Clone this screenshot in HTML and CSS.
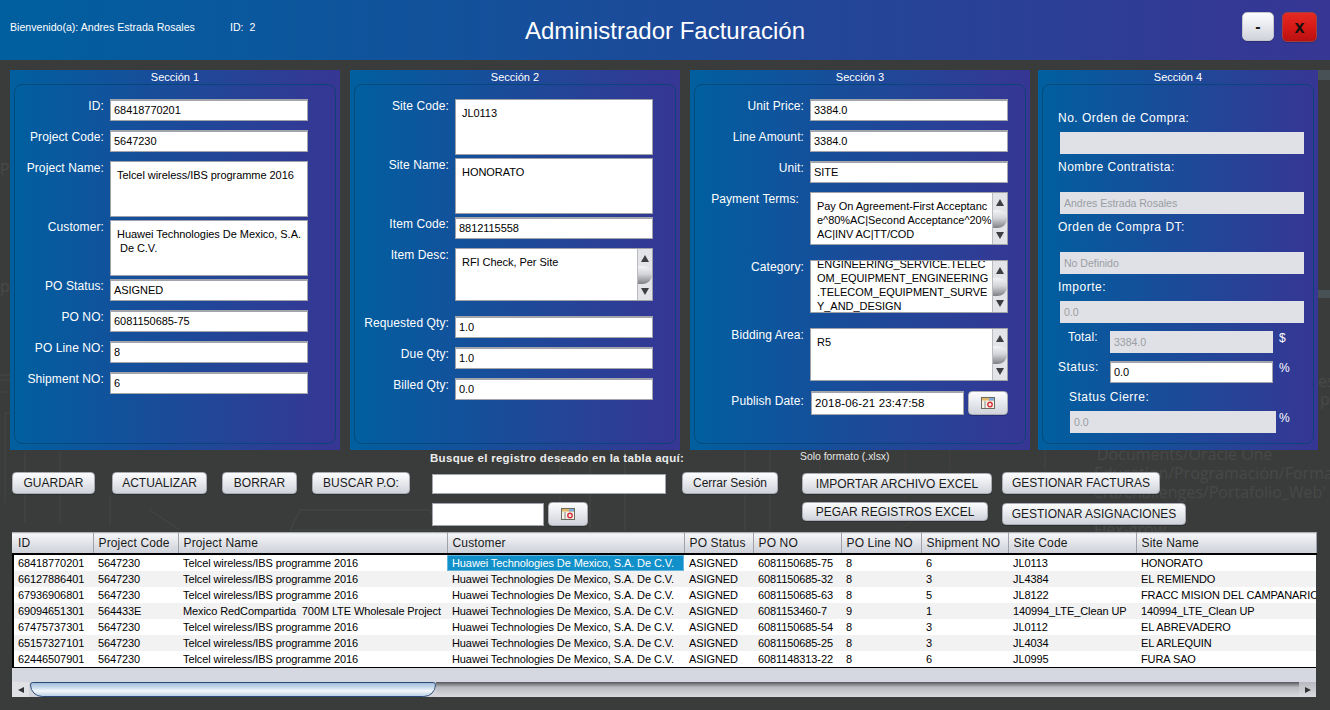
FILE: index.html
```html
<!DOCTYPE html>
<html lang="es">
<head>
<meta charset="utf-8">
<title>Administrador Facturación</title>
<link rel="stylesheet" href="styles.css">
</head>
<body>
<svg width="0" height="0" class="defs">
  <symbol id="cal" viewBox="0 0 14 12">
    <rect x="0.5" y="0.5" width="13" height="11" fill="#f4f1e6" stroke="#6d6a60"/>
    <rect x="1" y="1" width="12" height="2.5" fill="#e2b765"/>
    <rect x="8" y="1" width="5" height="2.5" fill="#7fa8d8"/>
    <line x1="4" y1="4" x2="4" y2="11" stroke="#8a8a8a"/>
    <circle cx="9" cy="7.5" r="2.2" fill="none" stroke="#d8313a" stroke-width="1.4"/>
  </symbol>
</svg>
<div class="app">
  <div class="wallpaper">
    <span class="ghost g1">Documents/Oracle One</span>
    <span class="ghost g2">Education/Programación/Formación Fr</span>
    <span class="ghost g3">era/challenges/Portafolio_Web'</span>
    <span class="ghost g4">Flex-grow</span>
    <span class="ghost g5">es</span>
    <span class="ghost g6">p</span>
    <span class="ghost g7">Pa</span>
    <span class="ghost g8">pt</span>
    <svg class="wall-art" width="1330" height="710" viewBox="0 0 1330 710" fill="none">
      <path d="M1318 70h12v10h-12zM1318 290h12v8h-12z" fill="#485256"/>
      <path d="M0 375h10M0 380h10M0 392h10M5 413h5M5 413v90M25 452v70M60 452v70M110 495v30M150 510l30 20M560 450v80M590 450v80M625 450v80M745 450v80M770 450v80M1045 450v20" stroke="#444746"/>
      <path d="M820 450v70M905 450v70M930 505l-30 25M950 450v20" stroke="#474141"/>
      <path d="M300 510h130l10 20H290z" stroke="#434846"/>
    </svg>
  </div>

  <header class="topbar">
    <div class="welcome"><span class="welcome-name">Bienvenido(a): Andres Estrada Rosales</span><span>ID:&nbsp; 2</span></div>
    <h1 class="title">Administrador Facturación</h1>
    <div class="win-buttons">
      <button class="btn win-min">-</button>
      <button class="btn win-close">x</button>
    </div>
  </header>

  <main class="panels">
    <section class="panel p1">
      <h2 class="panel-title">Sección 1</h2>
      <div class="frame">
        <div class="row"><label>ID:</label><div class="field">68418770201</div></div>
        <div class="row"><label>Project Code:</label><div class="field">5647230</div></div>
        <div class="row"><label>Project Name:</label><div class="area tall"><div class="area-text">Telcel wireless/IBS programme 2016</div></div></div>
        <div class="row tight"><label>Customer:</label><div class="area tall"><div class="area-text">Huawei Technologies De Mexico, S.A.<br>&nbsp;De C.V.</div></div></div>
        <div class="row tight"><label>PO Status:</label><div class="field">ASIGNED</div></div>
        <div class="row"><label>PO NO:</label><div class="field">6081150685-75</div></div>
        <div class="row"><label>PO Line NO:</label><div class="field">8</div></div>
        <div class="row"><label>Shipment NO:</label><div class="field">6</div></div>
      </div>
    </section>

    <section class="panel p2">
      <h2 class="panel-title">Sección 2</h2>
      <div class="frame">
        <div class="row"><label>Site Code:</label><div class="area tall"><div class="area-text">JL0113</div></div></div>
        <div class="row tight"><label>Site Name:</label><div class="area tall"><div class="area-text">HONORATO</div></div></div>
        <div class="row tight"><label>Item Code:</label><div class="field">8812115558</div></div>
        <div class="row"><label>Item Desc:</label><div class="area mid"><div class="area-text">RFI Check, Per Site</div><div class="vbar"><i class="up"></i><i class="lens"></i><i class="down"></i></div></div></div>
        <div class="row after-mid"><label>Requested Qty:</label><div class="field">1.0</div></div>
        <div class="row"><label>Due Qty:</label><div class="field">1.0</div></div>
        <div class="row"><label>Billed Qty:</label><div class="field">0.0</div></div>
      </div>
    </section>

    <section class="panel p3">
      <h2 class="panel-title">Sección 3</h2>
      <div class="frame">
        <div class="row"><label>Unit Price:</label><div class="field">3384.0</div></div>
        <div class="row"><label>Line Amount:</label><div class="field">3384.0</div></div>
        <div class="row"><label>Unit:</label><div class="field">SITE</div></div>
        <div class="row"><label class="inset">Payment Terms:</label><div class="area mid"><div class="area-text">Pay On Agreement-First Acceptanc<br>e^80%AC|Second Acceptance^20%<br>AC|INV AC|TT/COD</div><div class="vbar"><i class="up"></i><i class="lens"></i><i class="down"></i></div></div></div>
        <div class="row after-mid"><label>Category:</label><div class="area mid"><div class="area-text scrolled">ENGINEERING_SERVICE.TELEC<br>OM_EQUIPMENT_ENGINEERING<br>.TELECOM_EQUIPMENT_SURVE<br>Y_AND_DESIGN</div><div class="vbar"><i class="up"></i><i class="lens"></i><i class="down"></i></div></div></div>
        <div class="row after-mid"><label>Bidding Area:</label><div class="area mid"><div class="area-text">R5</div><div class="vbar"><i class="up"></i><i class="lens"></i><i class="down"></i></div></div></div>
        <div class="row date-row"><label>Publish Date:</label><div class="field date-field">2018-06-21 23:47:58</div><button class="btn cal-btn"><svg class="cal-icon"><use href="#cal"/></svg></button></div>
      </div>
    </section>

    <section class="panel p4">
      <h2 class="panel-title">Sección 4</h2>
      <div class="frame stack">
        <label class="l-first">No. Orden de Compra:</label>
        <div class="field off wide f-first"></div>
        <label class="l-next">Nombre Contratista:</label>
        <div class="field off wide f-low">Andres Estrada Rosales</div>
        <label class="l-next">Orden de Compra DT:</label>
        <div class="field off wide f-low">No Definido</div>
        <label class="l-next">Importe:</label>
        <div class="field off wide f-near">0.0</div>
        <div class="pair total"><label>Total:</label><div class="field off short">3384.0</div><span class="unit">$</span></div>
        <div class="pair status"><label>Status:</label><div class="field short">0.0</div><span class="unit">%</span></div>
        <label class="l-cierre">Status Cierre:</label>
        <div class="pair cierre"><div class="field off cierre-field">0.0</div><span class="unit">%</span></div>
      </div>
    </section>
  </main>

  <section class="toolbar">
    <div class="tb-actions">
      <button class="btn b-guardar">GUARDAR</button>
      <button class="btn b-actualizar">ACTUALIZAR</button>
      <button class="btn b-borrar">BORRAR</button>
      <button class="btn b-buscar">BUSCAR P.O:</button>
    </div>
    <div class="tb-search">
      <div class="search-title">Busque el registro deseado en la tabla aquí:</div>
      <div class="search-input"></div>
      <div class="search-date"><div class="search-input small"></div><button class="btn cal-btn"><svg class="cal-icon"><use href="#cal"/></svg></button></div>
    </div>
    <button class="btn b-cerrar">Cerrar Sesión</button>
    <div class="tb-excel">
      <div class="excel-note">Solo formato (.xlsx)</div>
      <button class="btn b-importar">IMPORTAR ARCHIVO EXCEL</button>
      <button class="btn b-pegar">PEGAR REGISTROS EXCEL</button>
    </div>
    <div class="tb-manage">
      <button class="btn b-facturas">GESTIONAR FACTURAS</button>
      <button class="btn b-asign">GESTIONAR ASIGNACIONES</button>
    </div>
  </section>

  <section class="grid-wrap">
    <table class="grid">
      <colgroup>
        <col class="c1"><col class="c2"><col class="c3"><col class="c4"><col class="c5"><col class="c6"><col class="c7"><col class="c8"><col class="c9"><col class="c10">
      </colgroup>
      <thead>
        <tr><th>ID</th><th>Project Code</th><th>Project Name</th><th>Customer</th><th>PO Status</th><th>PO NO</th><th>PO Line NO</th><th>Shipment NO</th><th>Site Code</th><th>Site Name</th></tr>
      </thead>
      <tbody>
        <tr><td>68418770201</td><td>5647230</td><td>Telcel wireless/IBS programme 2016</td><td class="sel">Huawei Technologies De Mexico, S.A. De C.V.</td><td>ASIGNED</td><td>6081150685-75</td><td>8</td><td>6</td><td>JL0113</td><td>HONORATO</td></tr>
        <tr><td>66127886401</td><td>5647230</td><td>Telcel wireless/IBS programme 2016</td><td>Huawei Technologies De Mexico, S.A. De C.V.</td><td>ASIGNED</td><td>6081150685-32</td><td>8</td><td>3</td><td>JL4384</td><td>EL REMIENDO</td></tr>
        <tr><td>67936906801</td><td>5647230</td><td>Telcel wireless/IBS programme 2016</td><td>Huawei Technologies De Mexico, S.A. De C.V.</td><td>ASIGNED</td><td>6081150685-63</td><td>8</td><td>5</td><td>JL8122</td><td>FRACC MISION DEL CAMPANARIO</td></tr>
        <tr><td>69094651301</td><td>564433E</td><td>Mexico RedCompartida&nbsp; 700M LTE Wholesale Project</td><td>Huawei Technologies De Mexico, S.A. De C.V.</td><td>ASIGNED</td><td>6081153460-7</td><td>9</td><td>1</td><td>140994_LTE_Clean UP</td><td>140994_LTE_Clean UP</td></tr>
        <tr><td>67475737301</td><td>5647230</td><td>Telcel wireless/IBS programme 2016</td><td>Huawei Technologies De Mexico, S.A. De C.V.</td><td>ASIGNED</td><td>6081150685-54</td><td>8</td><td>3</td><td>JL0112</td><td>EL ABREVADERO</td></tr>
        <tr><td>65157327101</td><td>5647230</td><td>Telcel wireless/IBS programme 2016</td><td>Huawei Technologies De Mexico, S.A. De C.V.</td><td>ASIGNED</td><td>6081150685-25</td><td>8</td><td>3</td><td>JL4034</td><td>EL ARLEQUIN</td></tr>
        <tr><td>62446507901</td><td>5647230</td><td>Telcel wireless/IBS programme 2016</td><td>Huawei Technologies De Mexico, S.A. De C.V.</td><td>ASIGNED</td><td>6081148313-22</td><td>8</td><td>6</td><td>JL0995</td><td>FURA SAO</td></tr>
      </tbody>
    </table>
    <div class="grid-fill"></div>
    <div class="hbar">
      <div class="hbar-btn"><i class="left"></i></div>
      <div class="hbar-thumb"></div>
      <div class="hbar-track"></div>
      <div class="hbar-btn"><i class="right"></i></div>
    </div>
  </section>
</div>
</body>
</html>
```

FILE: styles.css
```css
* { box-sizing: border-box; }
html, body { margin: 0; padding: 0; }
body {
  width: 1330px;
  height: 710px;
  overflow: hidden;
  background: #3a3c3b;
  font-family: "Liberation Sans", Arial, sans-serif;
  font-size: 12px;
  color: #111;
}
.defs { position: absolute; }
.app { position: relative; width: 1330px; height: 710px; overflow: hidden; }

/* Desktop showing through behind the window */
.wallpaper { position: absolute; inset: 0; }
.wall-art { position: absolute; left: 0; top: 0; }
.ghost {
  position: absolute;
  font-family: "Open Sans", sans-serif;
  font-size: 16px;
  line-height: 20px;
  color: #474949;
  white-space: nowrap;
}
.g1 { left: 1097px; top: 444px; }
.g2 { left: 1094px; top: 463px; }
.g3 { left: 1094px; top: 482px; }
.g4 { left: 1094px; top: 519px; }
.g5 { left: 1318px; top: 371px; width: 12px; overflow: hidden; }
.g6 { left: 1320px; top: 389px; width: 10px; overflow: hidden; }
.g7 { left: 0; top: 159px; width: 10px; overflow: hidden; }
.g8 { left: 0; top: 276px; width: 10px; overflow: hidden; }

/* Top bar */
.topbar {
  position: relative;
  height: 60px;
  display: grid;
  grid-template-columns: 1fr auto 1fr;
  background: linear-gradient(90deg, #005f9f 0%, #373694 100%);
  color: #fff;
}
.welcome {
  display: flex;
  padding: 20px 0 0 10px;
  font-size: 10.6px;
  line-height: 14px;
}
.welcome-name { width: 220px; }
.title {
  margin: 0;
  padding-top: 17px;
  font-size: 24px;
  line-height: 28px;
  font-weight: 400;
}
.win-buttons {
  display: flex;
  justify-content: flex-end;
  gap: 8px;
  padding: 12px 13px 0 0;
}

/* Buttons */
.btn {
  display: block;
  margin: 0;
  padding: 0;
  height: 22px;
  font-family: inherit;
  font-size: 12px;
  color: #1a1a1a;
  border: 1px solid #a9acb3;
  border-radius: 4px;
  background: linear-gradient(180deg, #fdfdfe 0%, #e9ebef 45%, #d0d3db 100%);
  box-shadow: 0 1px 0 rgba(0, 0, 0, .2);
}
.win-min { width: 32px; height: 29px; font-size: 16px; font-weight: 700; border-color: #c4c6cc; border-radius: 5px; }
.win-close {
  width: 35px;
  height: 30px;
  font-size: 18px;
  line-height: 24px;
  font-weight: 700;
  color: #111;
  border-color: #a04040;
  border-radius: 5px;
  background: linear-gradient(180deg, #e42a22 0%, #d81a17 50%, #b81110 100%);
}
.cal-btn { width: 40px; height: 24px; display: flex; align-items: center; justify-content: center; }
.cal-icon { width: 14px; height: 12px; }

/* Panels */
.panels {
  position: relative;
  display: flex;
  gap: 10px;
  padding: 10px 0 0 10px;
  height: 390px;
}
.panel {
  height: 380px;
  background: linear-gradient(90deg, #005f9f 0%, #373694 100%);
  color: #fff;
  display: flex;
  flex-direction: column;
}
.p1, .p2 { width: 330px; }
.p3 { width: 340px; margin-right: -2px; }
.p4 { width: 280px; }
.panel-title {
  margin: 0;
  height: 14px;
  font-size: 11px;
  line-height: 14px;
  font-weight: 400;
  text-align: center;
}
.frame {
  height: 360px;
  margin: 0 4px;
  padding-top: 14px;
  border: 1px solid rgba(0, 70, 110, .75);
  border-radius: 8px;
}

/* Form rows */
.row { display: flex; align-items: flex-start; margin-top: 9px; }
.row:first-child { margin-top: 0; }
.row.tight { margin-top: 3px; }
.row.after-mid { margin-top: 15px; }
.date-row { margin-top: 10px; }
label {
  display: block;
  flex: none;
  line-height: 14px;
  font-size: 12px;
  letter-spacing: .1px;
  color: #fff;
  white-space: nowrap;
}
.row label { text-align: right; margin-right: 6px; }
.p1 .row label { width: 89px; }
.p2 .row label { width: 94px; }
.p3 .row label { width: 109px; }
.p3 .row label.inset { padding-right: 5px; }
.date-row label { padding-top: 3px; }

.field {
  flex: none;
  width: 198px;
  height: 22px;
  padding: 0 3px;
  font-size: 11px;
  line-height: 19px;
  letter-spacing: -.05px;
  background: #fff;
  color: #000;
  border: 1px solid #a2a5ab;
  border-top-width: 2px;
}
.field.off {
  background: #dfe1e6;
  color: #9b9ea4;
  border: 0;
  padding: 0 4px;
  font-size: 10.6px;
  line-height: 22px;
}
.area {
  flex: none;
  display: flex;
  width: 198px;
  background: #fff;
  color: #000;
  border: 1px solid #9ea1a8;
  overflow: hidden;
}
.area.tall { height: 56px; }
.area.mid { height: 53px; }
.area-text {
  flex: 1;
  padding: 6px 0 0 6px;
  font-size: 11px;
  line-height: 14px;
  letter-spacing: -.05px;
  white-space: nowrap;
  overflow: hidden;
}
.area-text.scrolled { padding-top: 0; margin-top: -4px; }
.date-field { width: 153px; height: 24px; margin-left: 1px; line-height: 20px; font-size: 11.5px; letter-spacing: .15px; }
.date-row .cal-btn { margin-left: 4px; }

/* Mini vertical scrollbar */
.vbar {
  flex: none;
  width: 15px;
  display: flex;
  flex-direction: column;
  align-items: center;
  justify-content: space-between;
  padding: 6px 0 5px;
  background: #e2e4e8;
  border-left: 1px solid #b9bbc0;
}
.vbar .up { width: 0; height: 0; border: 4px solid transparent; border-top: 0; border-bottom: 7px solid #3c3e42; }
.vbar .down { width: 0; height: 0; border: 4px solid transparent; border-bottom: 0; border-top: 7px solid #3c3e42; }
.vbar .lens {
  width: 14px;
  height: 18px;
  border-radius: 0 9px 9px 0;
  background: linear-gradient(180deg, #f4f4f6 0%, #d4d5d9 45%, #7f8187 100%);
}

/* Section 4 */
.stack { padding-top: 0; padding-left: 15px; }
.stack label { letter-spacing: .5px; }
.l-first { margin-top: 26px; }
.f-first { margin-top: 7px; }
.l-next { margin-top: 6px; }
.f-low { margin-top: 18px; }
.f-near { margin-top: 7px; }
.wide { width: 244px; margin-left: 2px; }
.pair { display: flex; align-items: flex-start; }
.total { margin-top: 8px; }
.status { margin-top: 8px; }
.short { width: 163px; }
.total label { width: 52px; padding-left: 10px; margin-top: -1px; letter-spacing: .2px; }
.status label { width: 52px; margin-top: -1px; }
.unit { margin-left: 6px; font-size: 12px; line-height: 14px; color: #fff; }
.l-cierre { margin: 7px 0 0 11px; }
.cierre { margin: 7px 0 0 12px; }
.cierre-field { width: 206px; }
.cierre .unit { margin-left: 3px; }

/* Toolbar */
.toolbar {
  position: relative;
  display: flex;
  align-items: flex-start;
  height: 82px;
  padding-left: 12px;
}
.tb-actions { display: flex; padding-top: 22px; }
.b-guardar { width: 83px; }
.b-actualizar { width: 95px; margin-left: 17px; }
.b-borrar { width: 75px; margin-left: 15px; }
.b-buscar { width: 98px; margin-left: 15px; }
.tb-search { width: 256px; margin-left: 20px; padding-top: 1px; }
.search-title {
  height: 14px;
  font-size: 11.5px;
  line-height: 14px;
  font-weight: 700;
  letter-spacing: .3px;
  color: #eceded;
  white-space: nowrap;
}
.search-input {
  width: 234px;
  height: 20px;
  margin: 9px 0 0 2px;
  background: #fff;
  border: 1px solid #a2a5ab;
}
.search-date { display: flex; margin-top: 8px; }
.search-date .search-input { margin-top: 1px; width: 112px; height: 23px; }
.search-date .cal-btn { margin-left: 4px; }
.b-cerrar { width: 96px; margin: 22px 0 0 -4px; }
.tb-excel { width: 202px; margin-left: 22px; display: flex; flex-direction: column; }
.excel-note { height: 14px; font-size: 10.4px; line-height: 14px; color: #e5e5e5; white-space: nowrap; }
.b-importar { width: 190px; height: 21px; margin: 9px 0 0 2px; }
.b-pegar { width: 186px; height: 19px; margin: 8px 0 0 2px; }
.tb-manage { display: flex; flex-direction: column; padding-top: 22px; }
.b-facturas { width: 158px; }
.b-asign { width: 184px; margin-top: 9px; }

/* Data grid */
.grid-wrap { position: relative; width: 1304px; height: 165px; margin-left: 12px; background: #d5d8e0; display: flex; flex-direction: column; }
.grid { width: 1304px; table-layout: fixed; border-collapse: collapse; }
.c1 { width: 81px; } .c2 { width: 85px; } .c3 { width: 269px; } .c4 { width: 237px; } .c5 { width: 69px; }
.c6 { width: 88px; } .c7 { width: 80px; } .c8 { width: 87px; } .c9 { width: 128px; } .c10 { width: 180px; }
.grid th {
  height: 21px;
  padding: 0 0 0 5px;
  font-size: 12px;
  font-weight: 400;
  text-align: left;
  letter-spacing: .15px;
  color: #1a1a1a;
  background: linear-gradient(180deg, #f6f7f9 0%, #dfe1e6 55%, #cdd0d7 100%);
  border-right: 1px solid #9fa2a9;
  border-top: 1px solid #aeb1b7;
  border-bottom: 2px solid #000;
  white-space: nowrap;
}
.grid th:first-child { padding-left: 6px; }
.grid td {
  height: 16px;
  padding: 0 0 0 5px;
  font-size: 11px;
  line-height: 16px;
  letter-spacing: -.1px;
  color: #000;
  background: #fff;
  white-space: nowrap;
  overflow: hidden;
}
.grid td:first-child { padding-left: 6px; box-shadow: inset 2px 0 0 #000; }
.grid tbody tr:nth-child(even) td { background: #f2f2f3; }
.grid tbody tr:last-child td { border-bottom: 1px solid #000; height: 17px; }
.grid td.sel, .grid tbody tr td.sel { background: #1290c9; color: #fff; box-shadow: inset 0 0 0 1px #66b5dc; }
.grid-fill { flex: 1; }
.hbar { display: flex; height: 15px; background: #d2d4d9; }
.hbar-btn { flex: none; width: 17px; display: flex; align-items: center; justify-content: center; background: #dfe1e5; }
.hbar-btn:last-child { background: linear-gradient(180deg, #b8bac0, #d9dbe0); }
.hbar-btn .left { width: 0; height: 0; border: 3px solid transparent; border-left: 0; border-right: 6px solid #333; }
.hbar-btn .right { width: 0; height: 0; border: 3px solid transparent; border-right: 0; border-left: 6px solid #333; }
.hbar-thumb {
  flex: none;
  width: 406px;
  margin-left: 1px;
  border: 1px solid #2b4a78;
  border-radius: 3px 3px 13px 13px;
  background: linear-gradient(180deg, #9fbcd8 0%, #d9e7f3 45%, #f2f7fb 60%, #bcd2e6 100%);
}
.hbar-track {
  flex: 1;
  margin-right: -1px;
  background: linear-gradient(180deg, #55575b 0%, #b9bbc0 35%, #d9dbe0 100%);
}
```
